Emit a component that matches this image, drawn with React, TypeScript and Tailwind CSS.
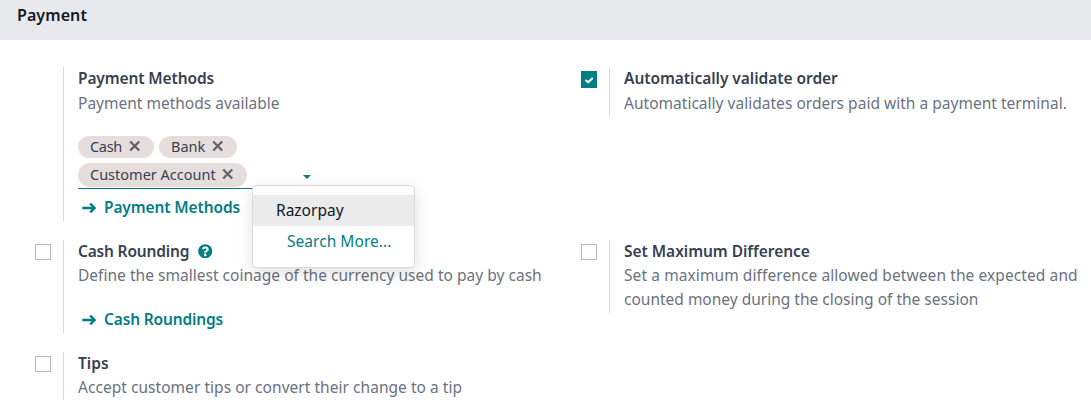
import type { ReactNode } from "react";
import { FaQuestionCircle } from "react-icons/fa";

function Checkbox({ checked = false }: { checked?: boolean }) {
  return (
    <span
      role="checkbox"
      aria-checked={checked}
      className={
        checked
          ? "flex h-[17px] w-4 items-center justify-center bg-[#017e84]"
          : "block size-4 border border-[#b5b7ba] bg-white"
      }
    >
      {checked && (
        <svg viewBox="0 0 16 16" className="size-4" fill="none" stroke="#fff" strokeWidth="2.1" strokeLinecap="round" strokeLinejoin="round">
          <path d="M5.2 8.5 7.2 10.3 11.2 6.5" />
        </svg>
      )}
    </span>
  );
}

function Setting({ box, className = "", children }: { box?: ReactNode; className?: string; children: ReactNode }) {
  return (
    <div className={`flex items-start ${className}`}>
      <div className="w-7 shrink-0 pt-1">{box}</div>
      <div className="self-stretch border-l border-[#d8dadd] pl-3.5">{children}</div>
    </div>
  );
}

function Title({ className = "", children }: { className?: string; children: ReactNode }) {
  return (
    <div className={`flex h-6 items-center whitespace-nowrap pb-0.5 font-semibold leading-6 text-[#374151] ${className}`}>
      {children}
    </div>
  );
}

function Desc({ className = "", children }: { className?: string; children: ReactNode }) {
  return <div className={`whitespace-nowrap leading-6 text-[#6b7280] ${className}`}>{children}</div>;
}

function Tag({ className = "", children }: { className?: string; children: ReactNode }) {
  return (
    <span className={`flex items-center justify-between rounded-full bg-[#e6dedd] pr-[13px] pl-3 text-[14.5px] text-[#374151] ${className}`}>
      {children}
      <svg viewBox="0 0 12 12" className="mb-0.5 size-3" fill="none" stroke="#5f636b" strokeWidth="2.3">
        <path d="m1.2 1.5 9 9m0-9-9 9" />
      </svg>
    </span>
  );
}

function LinkRow({ className = "", children }: { className?: string; children: ReactNode }) {
  return (
    <a className={`flex h-6 items-center gap-2 whitespace-nowrap pl-1 font-semibold text-[#017e84] ${className}`}>
      <svg viewBox="0 0 14 12" className="h-3 w-3.5" fill="none" stroke="currentColor" strokeWidth="2.3">
        <path d="M0.3 6h12.2M8.2 1.6 12.6 6 8.2 10.4" />
      </svg>
      {children}
    </a>
  );
}

export default function App() {
  return (
    <div className="h-[414px] w-[1091px] overflow-hidden bg-white font-['Noto_Sans',sans-serif] text-[15.5px]">
      <h2 className="h-10 bg-[#e7e9ed] pt-[3px] pl-[17px] text-base font-semibold leading-6 tracking-[0.08px] text-[#111827]">
        Payment
      </h2>
      <div className="grid grid-cols-[546px_1fr] items-start gap-y-[19px] pt-[27px] pl-[35px]">
        <Setting className="h-[154px]">
          <Title className="tracking-[-0.12px]">Payment Methods</Title>
          <Desc>Payment methods available</Desc>
          <div className="relative mt-[21px] flex h-[53px] w-[234px] flex-wrap content-start gap-[5px] border-b border-[#017e84]">
            <Tag className="h-[22px] w-[76px] tracking-[-0.3px]">Cash</Tag>
            <Tag className="h-[22px] w-[78px]">Bank</Tag>
            <Tag className="h-6 w-[169px]">Customer Account</Tag>
            <svg viewBox="0 0 8 4" className="absolute top-[39px] left-[225px] h-1 w-2" fill="#017e84">
              <path d="M0 0h8L4 4z" />
            </svg>
            <div className="absolute top-[49px] left-[174px] z-10 h-[83px] w-[163px] rounded border border-[#d8dadd] bg-white pt-[9px] shadow-[0_5px_16px_rgba(0,0,0,0.12)]">
              <div className="h-[31px] bg-[#ebebeb] pl-[23px] leading-[30px] text-[#111827]">Razorpay</div>
              <div className="h-[31px] pl-[34px] leading-[30px] tracking-[0.04px] text-[#017e84]">Search More...</div>
            </div>
          </div>
          <LinkRow className="mt-[7px] tracking-[-0.12px]">Payment Methods</LinkRow>
        </Setting>
        <Setting className="h-[49px]" box={<Checkbox checked />}>
          <Title className="tracking-[-0.04px]">Automatically validate order</Title>
          <Desc className="tracking-[0.02px]">Automatically validates orders paid with a payment terminal.</Desc>
        </Setting>

        <Setting className="h-[93px]" box={<Checkbox />}>
          <Title className="gap-[9px] tracking-[-0.18px]">
            Cash Rounding
            <FaQuestionCircle className="size-[14.5px] text-[#017e84]" />
          </Title>
          <Desc className="-mt-px tracking-[0.025px]">Define the smallest coinage of the currency used to pay by cash</Desc>
          <LinkRow className="mt-[21px] tracking-[-0.15px]">Cash Roundings</LinkRow>
        </Setting>
        <Setting className="h-[73px]" box={<Checkbox />}>
          <Title className="tracking-[-0.04px]">Set Maximum Difference</Title>
          <Desc className="-mt-px">
            <span className="tracking-[0.09px]">Set a maximum difference allowed between the expected and</span>
            <br />
            counted money during the closing of the session
          </Desc>
        </Setting>

        <Setting className="h-12" box={<Checkbox />}>
          <Title>Tips</Title>
          <Desc className="-mt-px tracking-[0.04px]">Accept customer tips or convert their change to a tip</Desc>
        </Setting>
      </div>
    </div>
  );
}
